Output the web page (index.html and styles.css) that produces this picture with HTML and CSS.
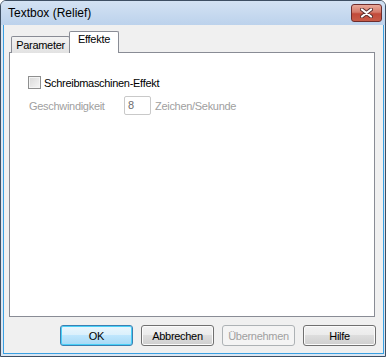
FILE: index.html
```html
<!DOCTYPE html>
<html lang="de">
<head>
    <meta charset="UTF-8">
    <title>Textbox (Relief)</title>
    <link rel="stylesheet" href="styles.css">
</head>
<body>
    <div class="window">
        <div class="titlebar">
            <span class="title">Textbox (Relief)</span>
            <button class="close-btn" aria-label="Schließen">
                <svg width="13" height="10" viewBox="0 0 13 10">
                    <path d="M2 1.5 L11 8.5 M11 1.5 L2 8.5" stroke="#5a3030" stroke-width="4" stroke-linecap="round"/>
                    <path d="M2 1.5 L11 8.5 M11 1.5 L2 8.5" stroke="#ffffff" stroke-width="2.2" stroke-linecap="round"/>
                </svg>
            </button>
        </div>

        <div class="client">
            <div class="tabs">
                <div class="tab">Parameter</div>
                <div class="tab active">Effekte</div>
            </div>

            <div class="panel">
                <label class="check">
                    <span class="check-box"></span>
                    Schreibmaschinen-Effekt
                </label>
                <div class="speed">
                    <span class="speed-label">Geschwindigkeit</span>
                    <span class="field">8</span>
                    <span class="unit">Zeichen/Sekunde</span>
                </div>
            </div>

            <div class="buttons">
                <button class="btn default">OK</button>
                <button class="btn">Abbrechen</button>
                <button class="btn" disabled>Übernehmen</button>
                <button class="btn">Hilfe</button>
            </div>
        </div>
    </div>
</body>
</html>
```

FILE: styles.css
```css
body {
    margin: 0;
    padding: 0;
    background-color: #ffffff;
    font-family: 'Liberation Sans', Arial, sans-serif;
    font-size: 11px;
    letter-spacing: -0.3px;
}

.window {
    width: 386px;
    height: 357px;
    box-sizing: border-box;
    border: 1px solid #3e4f63;
    border-radius: 6px 6px 0 0;
    background-color: #dbe6f2;
    padding: 0 1px 2px 2px;
    display: flex;
    flex-direction: column;
}

.titlebar {
    height: 24px;
    flex-shrink: 0;
    margin: 0 -1px 0 -2px;
    border-radius: 5px 5px 0 0;
    background: linear-gradient(#d3e2f3, #bcd2ec);
    display: flex;
    align-items: flex-start;
    justify-content: space-between;
}

.title {
    font-size: 12px;
    letter-spacing: 0;
    color: #000;
    padding: 5px 0 0 7px;
}

.close-btn {
    width: 31px;
    height: 18px;
    margin: 3px 3px 0 0;
    padding: 0;
    border: 1px solid #6e2d2d;
    border-radius: 3px;
    background: linear-gradient(#e9a99a, #d47a6a 45%, #c24a3a 55%, #c85c48);
    display: flex;
    align-items: center;
    justify-content: center;
}

.client {
    flex: 1;
    min-height: 0;
    background-color: #f0f0f0;
    border: 1px solid #3aa0e2;
    border-top: none;
    padding: 0 8px 0 5px;
    display: flex;
    flex-direction: column;
}

.tabs {
    display: flex;
    align-items: flex-end;
    padding: 6px 0 0 2px;
    position: relative;
    z-index: 1;
    margin-bottom: -1px;
    flex-shrink: 0;
}

.tab {
    width: 57px;
    height: 16px;
    border: 1px solid #898c95;
    border-bottom: none;
    border-radius: 2px 2px 0 0;
    background: linear-gradient(#f3f3f3, #e2e2e2);
    text-align: center;
    line-height: 17px;
    color: #000;
}

.tab.active {
    width: 48px;
    height: 21px;
    margin-left: -1px;
    background: #ffffff;
    line-height: 15px;
}

.panel {
    box-sizing: border-box;
    height: 265px;
    flex-shrink: 0;
    background-color: #ffffff;
    border: 1px solid #898c95;
    padding: 23px 0 0 18px;
}

.check {
    display: flex;
    align-items: center;
    gap: 3px;
    height: 13px;
    color: #000;
}

.check-box {
    width: 11px;
    height: 11px;
    border: 1px solid #8e8f8f;
    background: linear-gradient(135deg, #d8d8d8, #f6f6f6);
    box-shadow: inset 0 0 0 1px #f4f4f4;
}

.speed {
    display: flex;
    align-items: center;
    margin-top: 7px;
    color: #a0a0a0;
}

.speed-label {
    width: 95px;
    padding-left: 1px;
}

.field {
    width: 22px;
    height: 17px;
    border: 1px solid #c9c9c9;
    border-radius: 2px;
    padding-left: 3px;
    line-height: 17px;
    color: #6d6d6d;
    margin-right: 4px;
}

.buttons {
    display: flex;
    justify-content: flex-end;
    gap: 8px;
    margin: 8px -1px 0 0;
}

.btn {
    width: 73px;
    height: 21px;
    padding: 0;
    border: 1px solid #707070;
    border-radius: 3px;
    background: linear-gradient(#f2f2f2, #ebebeb 50%, #dddddd 50%, #cfcfcf);
    box-shadow: inset 0 0 0 1px #fbfbfb;
    font-family: 'Liberation Sans', Arial, sans-serif;
    font-size: 11px;
    letter-spacing: -0.3px;
    color: #000;
}

.btn.default {
    border-color: #3c7fb1;
    background: linear-gradient(#eaf6fd, #d9f0fc 50%, #bee6fd 50%, #a7d9f5);
    box-shadow: inset 0 0 0 1px #48d0f8;
}

.btn:disabled {
    border-color: #adb2b5;
    background: #f4f4f4;
    box-shadow: none;
    color: #a0a0a0;
}
```
